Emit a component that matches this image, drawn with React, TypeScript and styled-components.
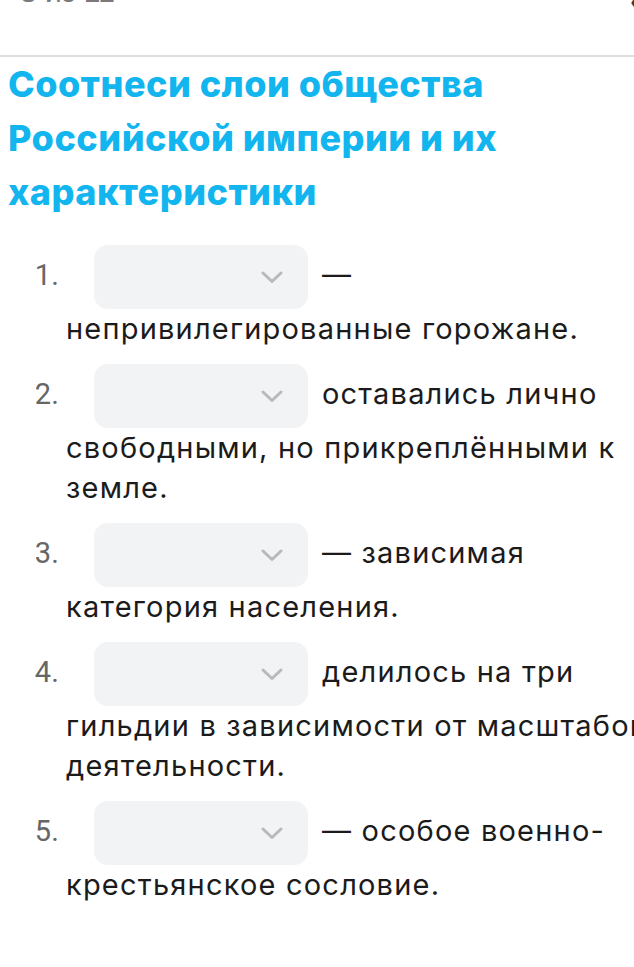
import styled, { createGlobalStyle } from "styled-components";

const GlobalStyle = createGlobalStyle`
  body {
    margin: 0;
    background: #ffffff;
    font-family: "Inter", "Roboto", sans-serif;
    color: #1b1b1b;
  }
`;

const items: string[] = [
  "— непривилегированные горожане.",
  "оставались лично свободными, но прикреплёнными к земле.",
  "— зависимая категория населения.",
  "делилось на три гильдии в зависимости от масштабов деятельности.",
  "— особое военно-крестьянское сословие.",
];

function Chevron() {
  return (
    <svg width="22" height="13" viewBox="0 0 22 13" fill="none">
      <polyline
        points="2,2 11,10.5 20,2"
        stroke="#b9b9bb"
        strokeWidth="3"
        strokeLinecap="round"
        strokeLinejoin="round"
      />
    </svg>
  );
}

function App() {
  return (
    <Page>
      <GlobalStyle />
      <TopBar>
        <Counter>8 из 11</Counter>
        <Back>‹</Back>
      </TopBar>
      <Title>Соотнеси слои общества Российской империи и их характеристики</Title>
      <List>
        {items.map((text, i) => (
          <Row key={i}>
            <Select>
              <Chevron />
            </Select>
            {text}
          </Row>
        ))}
      </List>
    </Page>
  );
}

const Page = styled.div`
  width: 634px;
  min-height: 967px;
  overflow: hidden;
`;

const TopBar = styled.header`
  height: 55px;
  border-bottom: 2px solid #dedede;
  display: flex;
  justify-content: space-between;
  align-items: flex-start;
  overflow: hidden;
`;

const Counter = styled.span`
  margin: -24px 0 0 20px;
  font-family: "Liberation Sans", sans-serif;
  font-size: 30px;
  line-height: 32px;
  color: #7a7a7a;
`;

const Back = styled.span`
  margin: -12px -5px 0 0;
  font-family: "Liberation Sans", sans-serif;
  font-size: 26px;
  font-weight: 700;
  line-height: 26px;
  color: #3a3a3a;
`;

const Title = styled.h1`
  margin: 0;
  padding: 0 8px;
  font-family: "Inter", sans-serif;
  font-size: 36px;
  font-weight: 800;
  letter-spacing: 0.5px;
  line-height: 54px;
  color: #13b5ef;
`;

const List = styled.ol`
  box-sizing: content-box;
  width: 594px;
  margin: 26px 0 0;
  padding: 0 0 0 66px;
  display: flex;
  flex-direction: column;
  gap: 15px;
`;

const Row = styled.li`
  font-size: 29px;
  letter-spacing: 1.2px;
  line-height: 40px;
  color: #1b1b1b;

  &::marker {
    font-family: "Liberation Sans Narrow", "Roboto", sans-serif;
    letter-spacing: 0;
    color: #666;
  }
`;

const Select = styled.span`
  display: inline-flex;
  align-items: center;
  justify-content: flex-end;
  box-sizing: border-box;
  width: 214px;
  height: 64px;
  margin: 0 14px 0 28px;
  padding-right: 25px;
  vertical-align: middle;
  border-radius: 14px;
  background: #f2f3f5;
`;

export default App;
